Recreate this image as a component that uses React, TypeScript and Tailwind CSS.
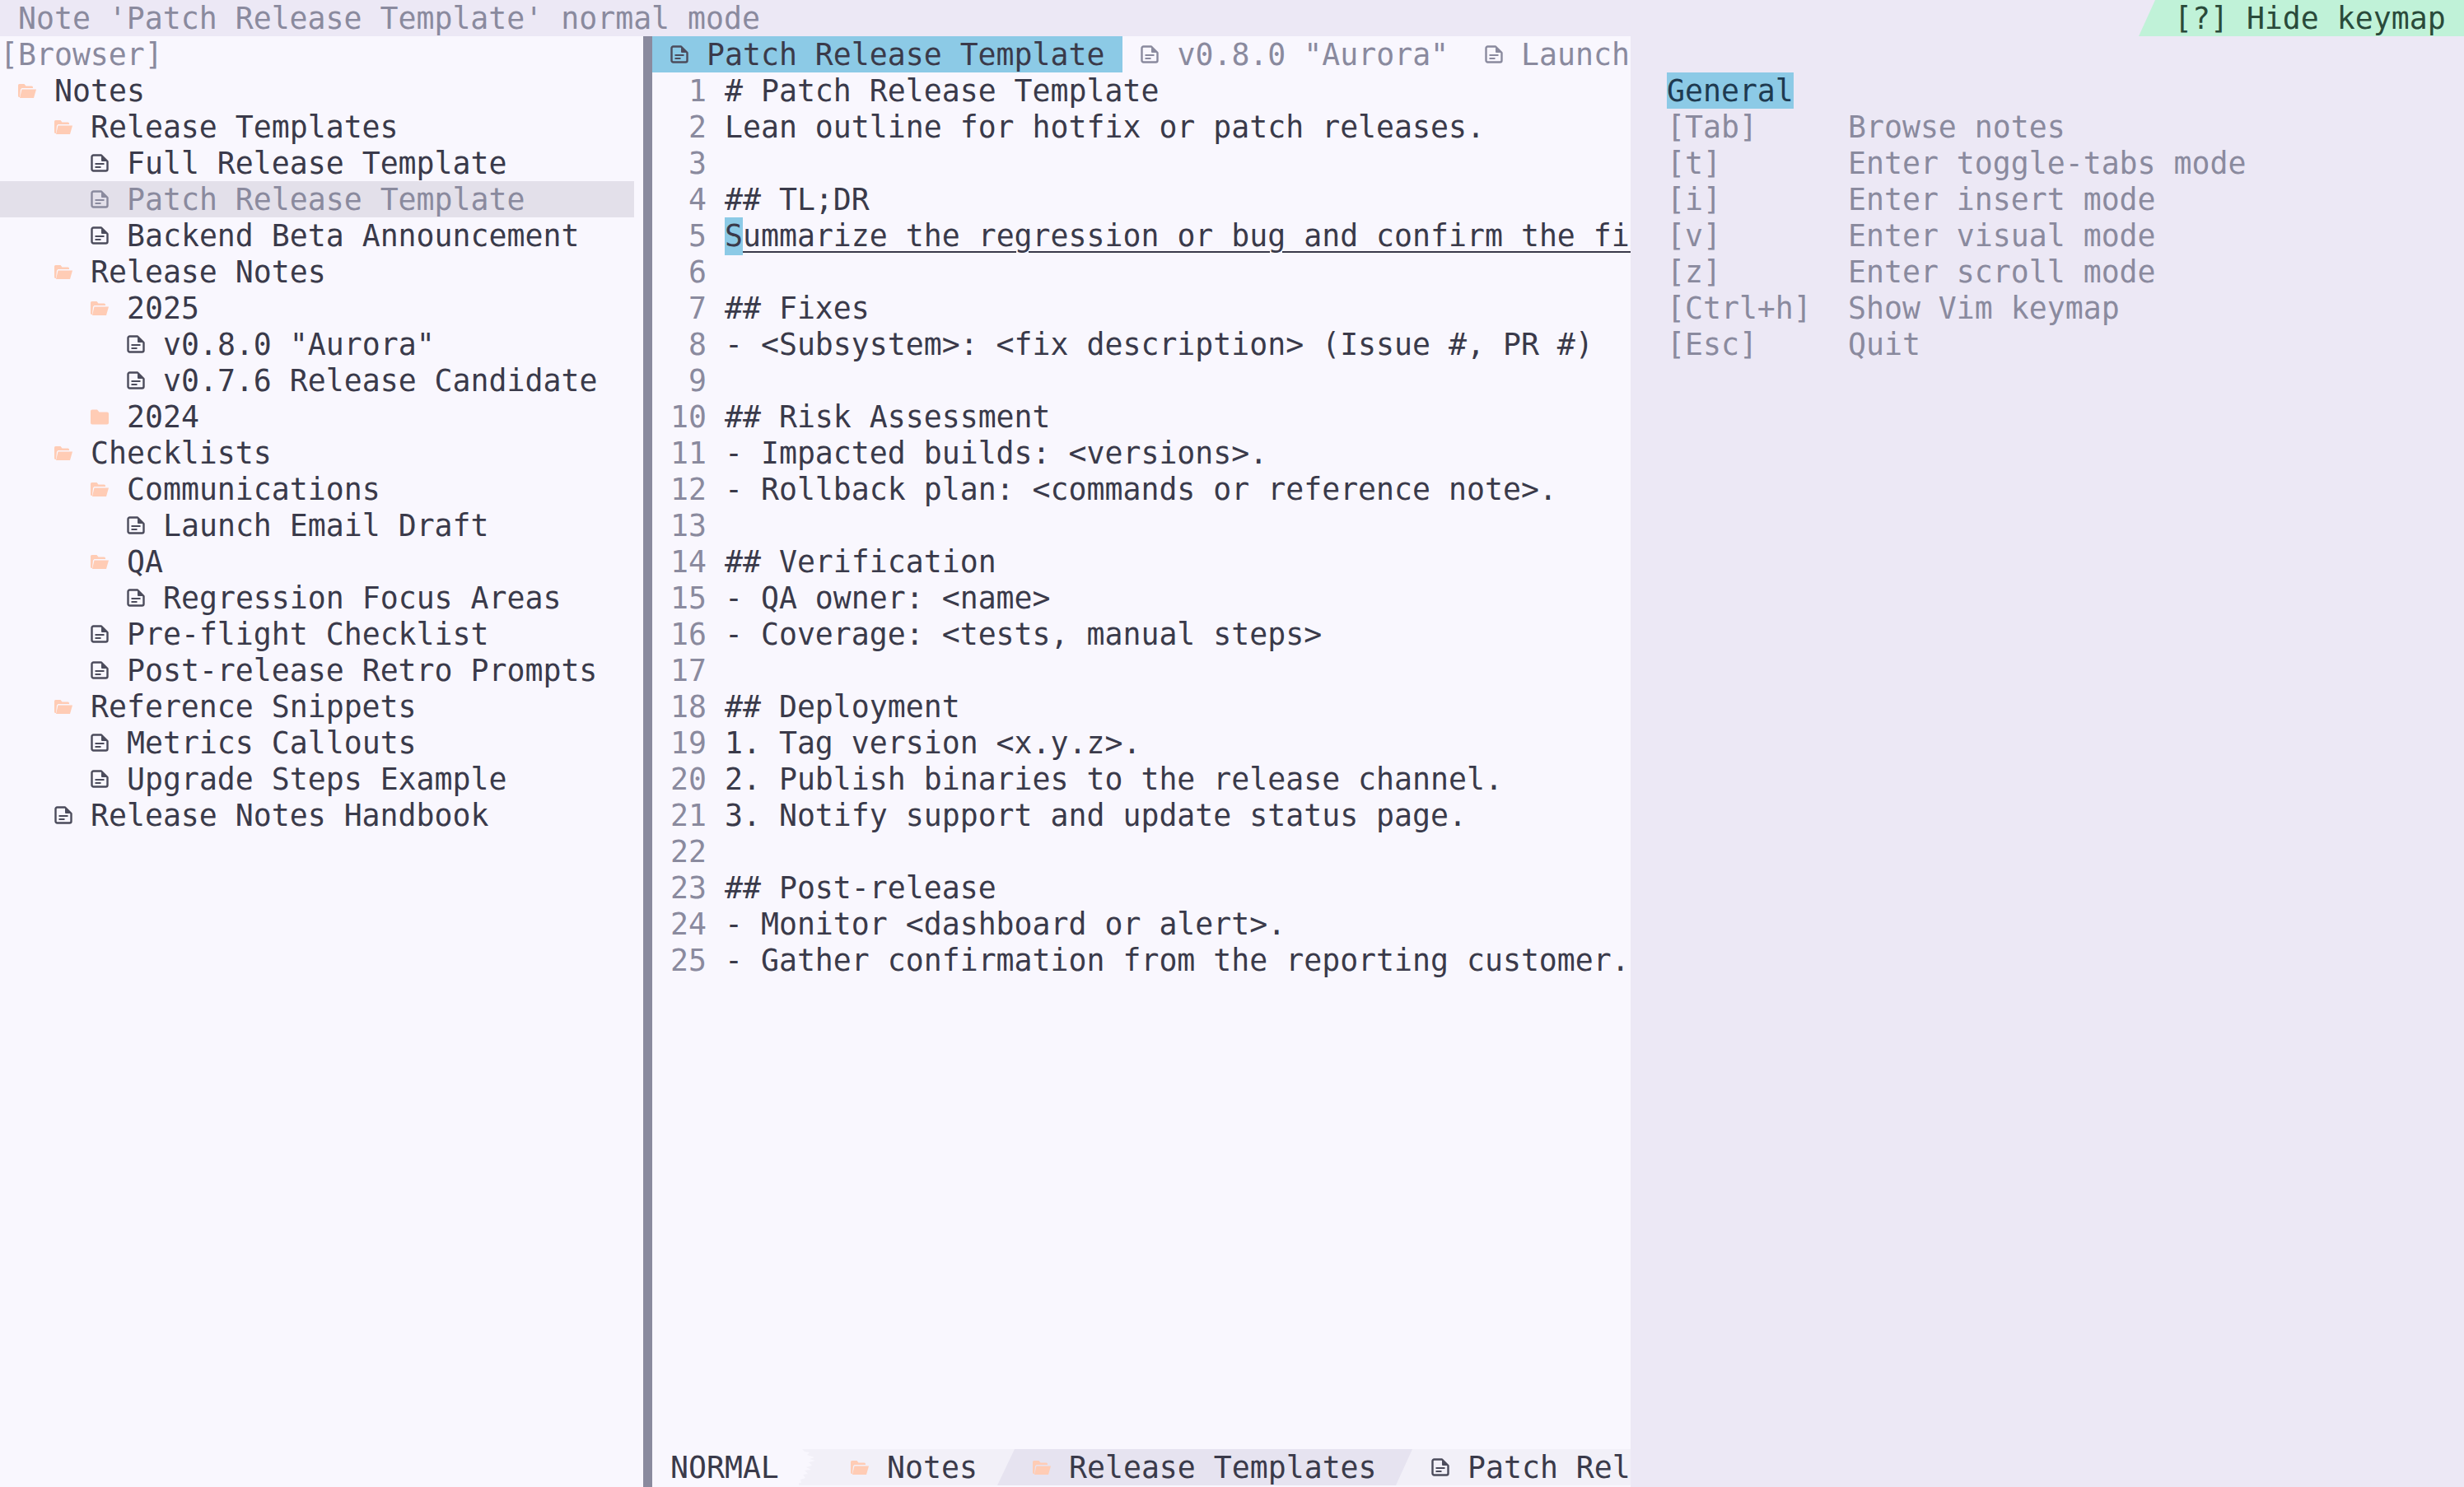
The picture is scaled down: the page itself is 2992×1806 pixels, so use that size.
import React from 'react';

const CELL = 'h-[44px] leading-[46px] whitespace-pre';

const FolderOpen = () => (
  <svg viewBox="0 0 22 22" className="w-[22px] h-[22px] shrink-0 self-center">
    <path d="M0 4.5A1.5 1.5 0 0 1 1.5 3h6l2 2.5h7A1.5 1.5 0 0 1 18 7v1H4.5L3 9.5 2 19h-.5A1.5 1.5 0 0 1 0 17.5z" fill="#ffccb5" />
    <path d="M4.5 9.5H22L19 20H2z" fill="#ffccb5" />
  </svg>
);

const FolderClosed = () => (
  <svg viewBox="0 0 22 22" className="w-[22px] h-[22px] shrink-0 self-center">
    <path d="M0 4.5a2 2 0 0 1 2-2h6l2.5 3H20a2 2 0 0 1 2 2v11a2 2 0 0 1-2 2H2a2 2 0 0 1-2-2z" fill="#ffccb5" />
  </svg>
);

const FileIcon = ({ color = '#4c4c5c' }: { color?: string }) => (
  <svg viewBox="0 0 22 22" className="w-[22px] h-[22px] shrink-0 self-center" fill="none" stroke={color} strokeWidth="2.4">
    <path d="M1.5 3.5a2 2 0 0 1 2-2H13l7.5 7.5v9.5a2 2 0 0 1-2 2h-15a2 2 0 0 1-2-2z" strokeLinejoin="round" />
    <path d="M13 2.5v5.5a1 1 0 0 0 1 1h6z" fill={color} stroke="none" />
    <path d="M5.5 12h11M5.5 16h7" strokeWidth="2" />
  </svg>
);

// torn edge glyph in front of the breadcrumb
const TornEdge = () => (
  <svg viewBox="0 0 22 44" className="w-[22px] h-[44px] shrink-0" fill="#f9f7fe">
    <path d="M0 0h4l3 3 6 1-3 3 9 3-6 2 7 2-8 2 4 4-7 2 6 3-8 1 4 4-6 1 3 4-6 2 1 4H0z" />
  </svg>
);

type TreeRow = { label: string; indent: number; kind: 'open' | 'closed' | 'file'; selected?: boolean };

const TREE: TreeRow[] = [
  { label: 'Notes', indent: 1, kind: 'open' },
  { label: 'Release Templates', indent: 3, kind: 'open' },
  { label: 'Full Release Template', indent: 5, kind: 'file' },
  { label: 'Patch Release Template', indent: 5, kind: 'file', selected: true },
  { label: 'Backend Beta Announcement', indent: 5, kind: 'file' },
  { label: 'Release Notes', indent: 3, kind: 'open' },
  { label: '2025', indent: 5, kind: 'open' },
  { label: 'v0.8.0 "Aurora"', indent: 7, kind: 'file' },
  { label: 'v0.7.6 Release Candidate', indent: 7, kind: 'file' },
  { label: '2024', indent: 5, kind: 'closed' },
  { label: 'Checklists', indent: 3, kind: 'open' },
  { label: 'Communications', indent: 5, kind: 'open' },
  { label: 'Launch Email Draft', indent: 7, kind: 'file' },
  { label: 'QA', indent: 5, kind: 'open' },
  { label: 'Regression Focus Areas', indent: 7, kind: 'file' },
  { label: 'Pre-flight Checklist', indent: 5, kind: 'file' },
  { label: 'Post-release Retro Prompts', indent: 5, kind: 'file' },
  { label: 'Reference Snippets', indent: 3, kind: 'open' },
  { label: 'Metrics Callouts', indent: 5, kind: 'file' },
  { label: 'Upgrade Steps Example', indent: 5, kind: 'file' },
  { label: 'Release Notes Handbook', indent: 3, kind: 'file' },
];

const LINES = [
  '# Patch Release Template',
  'Lean outline for hotfix or patch releases.',
  '',
  '## TL;DR',
  'Summarize the regression or bug and confirm the fix',
  '',
  '## Fixes',
  '- <Subsystem>: <fix description> (Issue #, PR #)',
  '',
  '## Risk Assessment',
  '- Impacted builds: <versions>.',
  '- Rollback plan: <commands or reference note>.',
  '',
  '## Verification',
  '- QA owner: <name>',
  '- Coverage: <tests, manual steps>',
  '',
  '## Deployment',
  '1. Tag version <x.y.z>.',
  '2. Publish binaries to the release channel.',
  '3. Notify support and update status page.',
  '',
  '## Post-release',
  '- Monitor <dashboard or alert>.',
  '- Gather confirmation from the reporting customer.',
];

const KEYMAP = [
  ['[Tab]', 'Browse notes'],
  ['[t]', 'Enter toggle-tabs mode'],
  ['[i]', 'Enter insert mode'],
  ['[v]', 'Enter visual mode'],
  ['[z]', 'Enter scroll mode'],
  ['[Ctrl+h]', 'Show Vim keymap'],
  ['[Esc]', 'Quit'],
];

export default function App() {
  return (
    <div className="w-[2992px] h-[1806px] overflow-hidden flex flex-col bg-[#ece8f5] text-[#3a3a4a] text-[36.5px] font-['DejaVu_Sans_Mono',monospace]">
      {/* Command line */}
      <div className={`${CELL} shrink-0 flex justify-between`}>
        <span className="pl-[22px] text-[#8a8a9e]">Note 'Patch Release Template' normal mode</span>
        <span className="w-[395px] pl-[43px] bg-[#c0f2d8] text-[#2a4a3a] [clip-path:polygon(20px_0,100%_0,100%_100%,0_100%)]">[?] Hide keymap</span>
      </div>

      <div className="flex-1 min-h-0 flex">
        {/* Browser */}
        <div className="w-[781px] shrink-0 bg-[#f9f7fe] pr-[11px]">
          <div className={`${CELL} text-[#8a8a9e]`}>[Browser]</div>
          {TREE.map((row) => (
            <div
              key={row.label}
              className={`${CELL} flex ${row.selected ? 'bg-[#e3e0ea] text-[#8a8a9e]' : ''}`}
              style={{ paddingLeft: row.indent * 22 }}
            >
              {row.kind === 'open' && <FolderOpen />}
              {row.kind === 'closed' && <FolderClosed />}
              {row.kind === 'file' && <FileIcon color={row.selected ? '#8a8a9e' : '#4c4c5c'} />}
              <span className="ml-[22px]">{row.label}</span>
            </div>
          ))}
        </div>
        <div className="w-[11px] shrink-0 bg-[#8a8a9e]" />

        {/* Note pane */}
        <div className="w-[1188px] shrink-0 bg-[#f9f7fe] flex flex-col overflow-hidden">
          <div className={`${CELL} shrink-0 flex overflow-hidden`}>
            <div className="flex shrink-0 px-[22px] bg-[#8ccae6]">
              <FileIcon />
              <span className="ml-[22px]">Patch Release Template</span>
            </div>
            <div className="flex shrink-0 px-[22px] text-[#8a8a9e]">
              <FileIcon color="#8a8a9e" />
              <span className="ml-[22px]">v0.8.0 "Aurora"</span>
            </div>
            <div className="flex shrink-0 px-[22px] text-[#8a8a9e]">
              <FileIcon color="#8a8a9e" />
              <span className="ml-[22px]">Launch Email Draft</span>
            </div>
          </div>

          <div className="flex-1 min-h-0">
            {LINES.map((line, i) => (
              <div key={i} className={`${CELL} flex`}>
                <span className="w-[66px] shrink-0 text-right text-[#8a8a9e]">{i + 1}</span>
                {i === 4 ? (
                  <span className="ml-[22px] underline underline-offset-[6px] decoration-2">
                    <span className="inline-block bg-[#8ccae6]">S</span>
                    {line.slice(1)}
                  </span>
                ) : (
                  <span className="ml-[22px]">{line}</span>
                )}
              </div>
            ))}
          </div>

          {/* Status line */}
          <div className={`${CELL} shrink-0 mb-[2px] flex overflow-hidden`}>
            <span className="w-[178px] shrink-0 pl-[22px]">NORMAL</span>
            <div className="flex-1 min-w-0 flex bg-[#f2f0f8]">
              <div className="w-[241px] shrink-0 flex">
                <TornEdge />
                <span className="ml-[41px] flex">
                  <FolderOpen />
                  <span className="ml-[22px]">Notes</span>
                </span>
              </div>
              <div className="w-[504px] shrink-0 flex pl-[43px] bg-[#e6e3f0] [clip-path:polygon(21px_0,100%_0,calc(100%-20px)_100%,0_100%)]">
                <FolderOpen />
                <span className="ml-[22px]">Release Templates</span>
              </div>
              <div className="flex shrink-0 pl-[23px]">
                <FileIcon />
                <span className="ml-[22px]">Patch Release Template</span>
              </div>
            </div>
          </div>
        </div>

        {/* Keymap */}
        <div className="flex-1 pl-[44px] pt-[44px] text-[#8a8a9e]">
          <div className={CELL}>
            <span className="inline-block h-[44px] bg-[#8ccae6] text-[#1e3a50]">General</span>
          </div>
          {KEYMAP.map(([key, desc]) => (
            <div key={key} className={`${CELL} flex`}>
              <span className="w-[220px] shrink-0">{key}</span>
              <span>{desc}</span>
            </div>
          ))}
        </div>
      </div>
    </div>
  );
}
